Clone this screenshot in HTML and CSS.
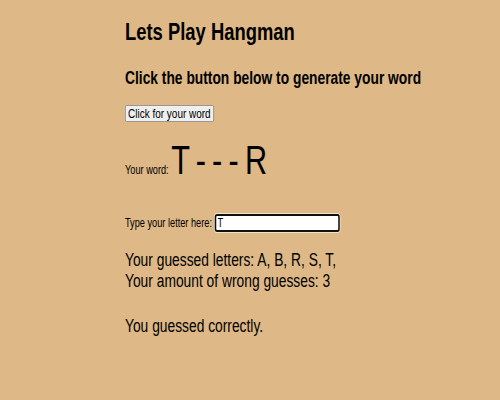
FILE: index.html
```html
<!DOCTYPE html>
<html>
<head>
<meta charset="utf-8">
<link rel="stylesheet" href="styles.css">
</head>
<body>
<main class="game">
  <h1 class="title">Lets Play Hangman</h1>
  <h2 class="subtitle">Click the button below to generate your word</h2>
  <button class="word-btn">Click for your word</button>
  <p class="word-row"><span class="small">Your word: </span><span class="word">T - - - R</span></p>
  <p class="letter-row">Type your letter here: <input class="letter-input" type="text" value="T"></p>
  <p class="info">Your guessed letters: A, B, R, S, T,<br>Your amount of wrong guesses: 3</p>
  <p class="info result">You guessed correctly.</p>
</main>
</body>
</html>
```
FILE: styles.css
```css
html, body {
  margin: 0;
  padding: 0;
  background: #deb887;
}
body {
  font-family: "Liberation Sans", Arial, sans-serif;
  color: #000;
  padding: 18px 0 0 125px;
}
.game {
  width: 100%;
  transform: scaleX(0.767);
  transform-origin: 0 0;
}
.title {
  font-size: 24px;
  font-weight: bold;
  line-height: 28px;
  margin: 0;
  white-space: nowrap;
}
.subtitle {
  font-size: 18px;
  font-weight: bold;
  line-height: 22px;
  margin: 21px 0 0 0;
  white-space: nowrap;
}
.word-btn {
  display: block;
  box-sizing: border-box;
  height: 17px;
  margin: 16px 0 0 0;
  padding: 0 3px;
  font-family: "Liberation Sans", Arial, sans-serif;
  font-size: 13px;
  line-height: 13px;
  color: #000;
  background: #efefef;
  border: 1px solid #8f8f8f;
  border-radius: 2px;
}
.word-row {
  margin: 15px 0 0 0;
  font-size: 40px;
  line-height: 46px;
}
.small {
  font-size: 12px;
  line-height: 12px;
}
.word {
  letter-spacing: -1.5px;
}
.letter-row {
  margin: 31px 0 0 0;
  font-size: 12px;
  line-height: 18px;
}
.letter-input {
  box-sizing: border-box;
  width: 163px;
  height: 18px;
  margin: 0;
  padding: 0 2px;
  font-family: "Liberation Sans", Arial, sans-serif;
  font-size: 12px;
  color: #000;
  background: #fff;
  border: 2px solid #111;
  border-radius: 3px;
  box-shadow: 0 0 0 1px rgba(255, 255, 255, 0.6);
  outline: none;
  vertical-align: baseline;
}
.info {
  font-size: 18px;
  line-height: 21px;
  margin: 18px 0 0 0;
  white-space: nowrap;
}
.result {
  margin-top: 24px;
}
```
